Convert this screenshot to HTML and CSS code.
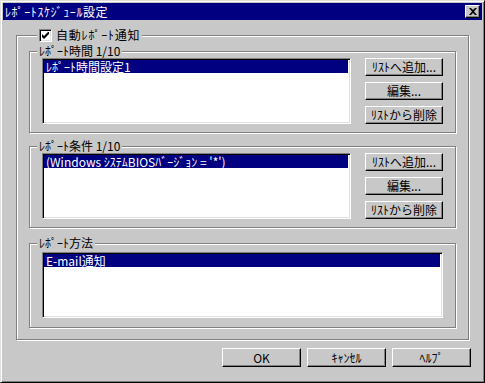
FILE: index.html
```html
<!DOCTYPE html>
<html lang="ja">
<head>
<meta charset="utf-8">
<title>ﾚﾎﾟｰﾄｽｹｼﾞｭｰﾙ設定</title>
<link rel="stylesheet" href="styles.css">
</head>
<body>
<div class="window">
  <div class="titlebar">
    <span class="title">ﾚﾎﾟｰﾄｽｹｼﾞｭｰﾙ設定</span>
    <span class="close"><svg width="8" height="7" viewBox="0 0 8 7"><path d="M0 0h2l2 2 2-2h2L5 3.5 8 7H6L4 5 2 7H0l3-3.5z" fill="#000"/></svg></span>
  </div>
  <div class="content">
    <fieldset class="outer">
      <legend class="outer-legend"><span class="checkrow"><span class="check"><svg width="7" height="7" viewBox="0 0 7 7"><path d="M0 2v3l2 2 5-5V-1L2 4z" fill="#000"/></svg></span><span class="checklabel">自動ﾚﾎﾟｰﾄ通知</span></span></legend>

      <fieldset class="group">
        <legend>ﾚﾎﾟｰﾄ時間 1/10</legend>
        <div class="group-row">
          <div class="list">
            <div class="item sel">ﾚﾎﾟｰﾄ時間設定1</div>
          </div>
          <div class="side">
            <button class="btn">ﾘｽﾄへ追加...</button>
            <button class="btn">編集...</button>
            <button class="btn">ﾘｽﾄから削除</button>
          </div>
        </div>
      </fieldset>

      <fieldset class="group">
        <legend>ﾚﾎﾟｰﾄ条件 1/10</legend>
        <div class="group-row">
          <div class="list">
            <div class="item sel">(Windows ｼｽﾃﾑBIOSﾊﾞｰｼﾞｮﾝ = '*')</div>
          </div>
          <div class="side">
            <button class="btn">ﾘｽﾄへ追加...</button>
            <button class="btn">編集...</button>
            <button class="btn">ﾘｽﾄから削除</button>
          </div>
        </div>
      </fieldset>

      <fieldset class="group last">
        <legend>ﾚﾎﾟｰﾄ方法</legend>
        <div class="list">
          <div class="item sel">E-mail通知</div>
        </div>
      </fieldset>
    </fieldset>
  </div>
  <div class="footer">
    <button class="btn big">OK</button>
    <button class="btn big">ｷｬﾝｾﾙ</button>
    <button class="btn big">ﾍﾙﾌﾟ</button>
  </div>
</div>
</body>
</html>
```
FILE: styles.css
```css
* { box-sizing: border-box; }
html, body {
  margin: 0;
  padding: 0;
  background: #404040;
}
body {
  font-family: "Noto Sans CJK JP", "Liberation Sans", sans-serif;
  font-size: 12px;
  line-height: 14px;
  color: #000;
}
.window {
  width: 485px;
  height: 383px;
  background: #c8c8c8;
  border: 1px solid;
  border-color: #dfdfdf #000 #000 #dfdfdf;
  box-shadow: inset 1px 1px #fff, inset -1px -1px #808080;
  padding: 2px;
  display: flex;
  flex-direction: column;
}
.titlebar {
  height: 17px;
  background: #000080;
  color: #fff;
  display: flex;
  align-items: center;
  justify-content: space-between;
  padding: 0 2px 0 2px;
}
.title {
  font-size: 12px;
  line-height: 14px;
  letter-spacing: 0.6px;
}
.close {
  width: 15px;
  height: 13px;
  background: #c8c8c8;
  border: 1px solid;
  border-color: #fff #000 #000 #fff;
  box-shadow: inset -1px -1px #808080;
  display: flex;
  align-items: center;
  justify-content: center;
}
.content {
  padding: 0 13px;
}
fieldset {
  margin: 0;
  border: 1px solid #808080;
  box-shadow: 1px 1px 0 #fff, inset 1px 1px 0 #fff;
  min-width: 0;
}
legend {
  padding: 0 2px;
  background: #c8c8c8;
  line-height: 14px;
  height: 14px;
  margin-left: -5px;
}
.outer {
  margin-top: 8px;
  padding: 2px 12px 11px 12px;
}
.outer-legend {
  margin-left: 8px;
}
.checkrow {
  display: inline-flex;
  align-items: center;
  gap: 4px;
  height: 14px;
  vertical-align: top;
}
.checklabel {
  letter-spacing: 0.8px;
}
.check {
  width: 13px;
  height: 13px;
  background: #fff;
  border: 1px solid;
  border-color: #808080 #fff #fff #808080;
  box-shadow: inset 1px 1px #000, inset -1px -1px #dfdfdf;
  display: flex;
  align-items: center;
  justify-content: center;
}
.group {
  padding: 0 12px 8px 12px;
  margin-top: 6px;
}
.group:first-of-type {
  margin-top: 0;
}
.group.last {
  padding-top: 2px;
  padding-bottom: 9px;
  margin-top: 8px;
}
.group-row {
  display: flex;
  gap: 14px;
}
.list {
  flex: 1;
  height: 66px;
  background: #fff;
  border: 1px solid;
  border-color: #808080 #fff #fff #808080;
  box-shadow: inset 1px 1px #000, inset -1px -1px #dfdfdf;
  padding: 1px 2px 2px 1px;
}
.item {
  height: 13px;
  line-height: 13px;
  padding-left: 2px;
  white-space: nowrap;
}
.item.sel {
  background: #000080;
  color: #fff;
}
.side {
  width: 78px;
  display: flex;
  flex-direction: column;
  gap: 6px;
}
.btn {
  font-family: inherit;
  font-size: 12px;
  line-height: 14px;
  color: #000;
  width: 78px;
  height: 18px;
  padding: 0;
  background: #c8c8c8;
  border: 1px solid;
  border-color: #fff #000 #000 #fff;
  box-shadow: inset -1px -1px #808080;
  display: flex;
  align-items: center;
  justify-content: center;
}
.footer {
  display: flex;
  justify-content: flex-end;
  gap: 6px;
  padding: 8px 11px 0 0;
}
.btn.big {
  width: 79px;
  height: 19px;
}
```
